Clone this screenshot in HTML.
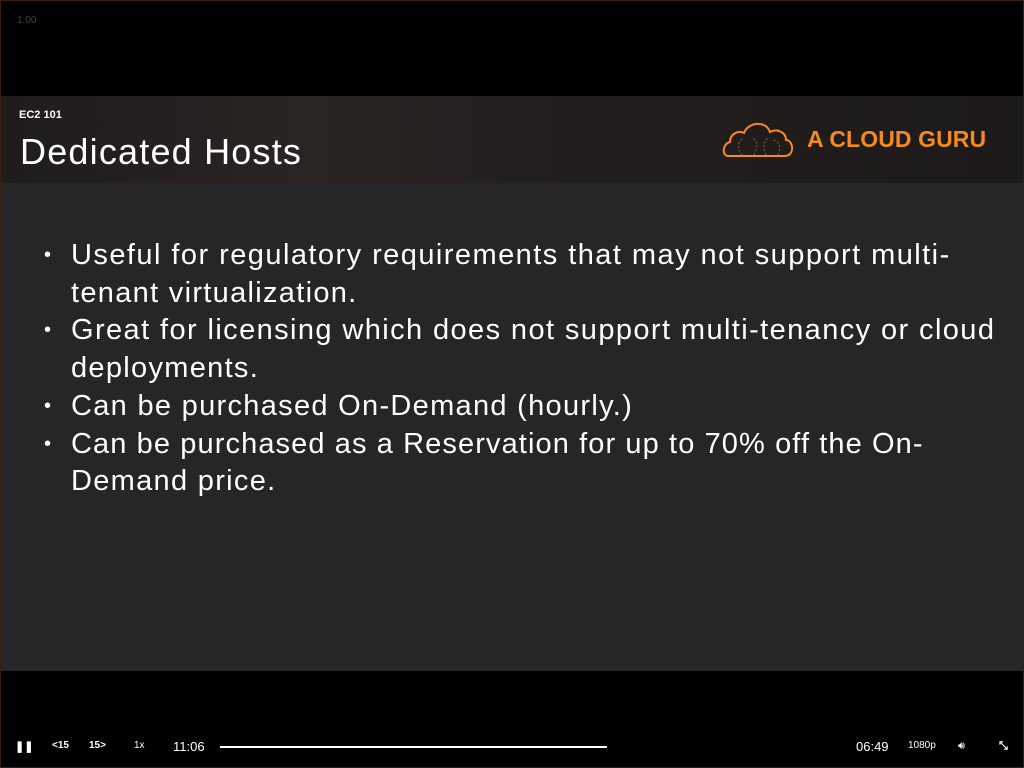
<!DOCTYPE html>
<html><head><style>
html,body{margin:0;padding:0;width:1024px;height:768px;overflow:hidden;background:#000;font-family:"Liberation Sans",sans-serif}
.frame{position:absolute;left:0;top:0;width:1022px;height:766px;border:1px solid #3a1e14}
.top{position:absolute;left:1px;top:1px;width:1022px;height:95px;background:#000}
.ver{position:absolute;left:16px;top:14px;color:#444;font-size:10px}
.hdr{position:absolute;left:1px;top:96px;width:1022px;height:87px;background:linear-gradient(90deg,#1f1c1c 0%,#2a2422 30%,#241f1f 50%,#1d1a1a 100%)}
.slide{position:absolute;left:1px;top:183px;width:1022px;height:488px;background:#262528}
.bottom{position:absolute;left:1px;top:671px;width:1022px;height:96px;background:#000}
.sub{position:absolute;left:19px;top:109px;color:#fff;font-size:11px;font-weight:bold}
.title{position:absolute;left:20px;top:131px;color:#fff;font-size:36px;letter-spacing:1.2px}
.logo{position:absolute;left:807px;top:126px;color:#f58a1f;font-size:23px;font-weight:bold;letter-spacing:0.1px}
ul{position:absolute;left:44px;top:237px;margin:0;padding:0;list-style:none;color:#fff;font-size:29px;line-height:37.7px;width:1000px;white-space:nowrap;letter-spacing:1.3px}
li{position:relative;padding-left:27px}
li:before{content:"•";position:absolute;left:0;font-size:20px}
.ctl{position:absolute;top:740px;color:#fff;font-size:11px}
</style></head><body>
<div class="top"><div class="ver">1.00</div></div>
<div class="hdr"></div>
<div class="slide"></div>
<div class="bottom"></div>
<div class="frame"></div>
<div class="sub">EC2 101</div>
<div class="title">Dedicated Hosts</div>
<svg style="position:absolute;left:722px;top:118px" width="76" height="42" viewBox="0 0 76 42"><path d="M6 38 C0 38 0 26 8 24 C8 16 16 12 22 15 C26 4 44 2 48 14 C54 10 64 14 64 22 C70 22 72 32 68 36 C66 38 64 38 62 38 Z" fill="none" stroke="#f58a1f" stroke-width="2"/><path d="M20 37 C14 30 16 22 22 20 M32 37 C36 28 36 22 30 20 M44 37 C40 28 42 20 48 20 M56 37 C60 28 56 22 50 22" fill="none" stroke="#a05a1a" stroke-width="1" stroke-dasharray="2 2"/></svg>
<div class="logo">A CLOUD GURU</div>
<ul>
<li><span style="letter-spacing:1.45px">Useful for regulatory requirements that may not support multi-</span><br>tenant virtualization.</li>
<li><span style="letter-spacing:1.4px">Great for licensing which does not support multi-tenancy or cloud</span><br>deployments.</li>
<li>Can be purchased On-Demand (hourly.)</li>
<li><span style="letter-spacing:1.1px">Can be purchased as a Reservation for up to 70% off the On-</span><br>Demand price.</li>
</ul>
<div class="ctl" style="left:15px;font-weight:bold">❚❚</div>
<div class="ctl" style="left:52px;font-size:10px;font-weight:bold">&lt;15</div>
<div class="ctl" style="left:89px;font-size:10px;font-weight:bold">15&gt;</div>
<div class="ctl" style="left:134px;font-size:10px">1x</div>
<div class="ctl" style="left:173px;font-size:13px;top:739px">11:06</div>
<div style="position:absolute;left:220px;top:746px;width:387px;height:2px;background:#fff"></div>
<div class="ctl" style="left:856px;font-size:13px;top:739px">06:49</div>
<div class="ctl" style="left:908px;font-size:10px">1080p</div>
<div class="ctl" style="left:958px">🔊︎</div>
<div class="ctl" style="left:999px;font-weight:bold">⤡</div>
</body></html>
